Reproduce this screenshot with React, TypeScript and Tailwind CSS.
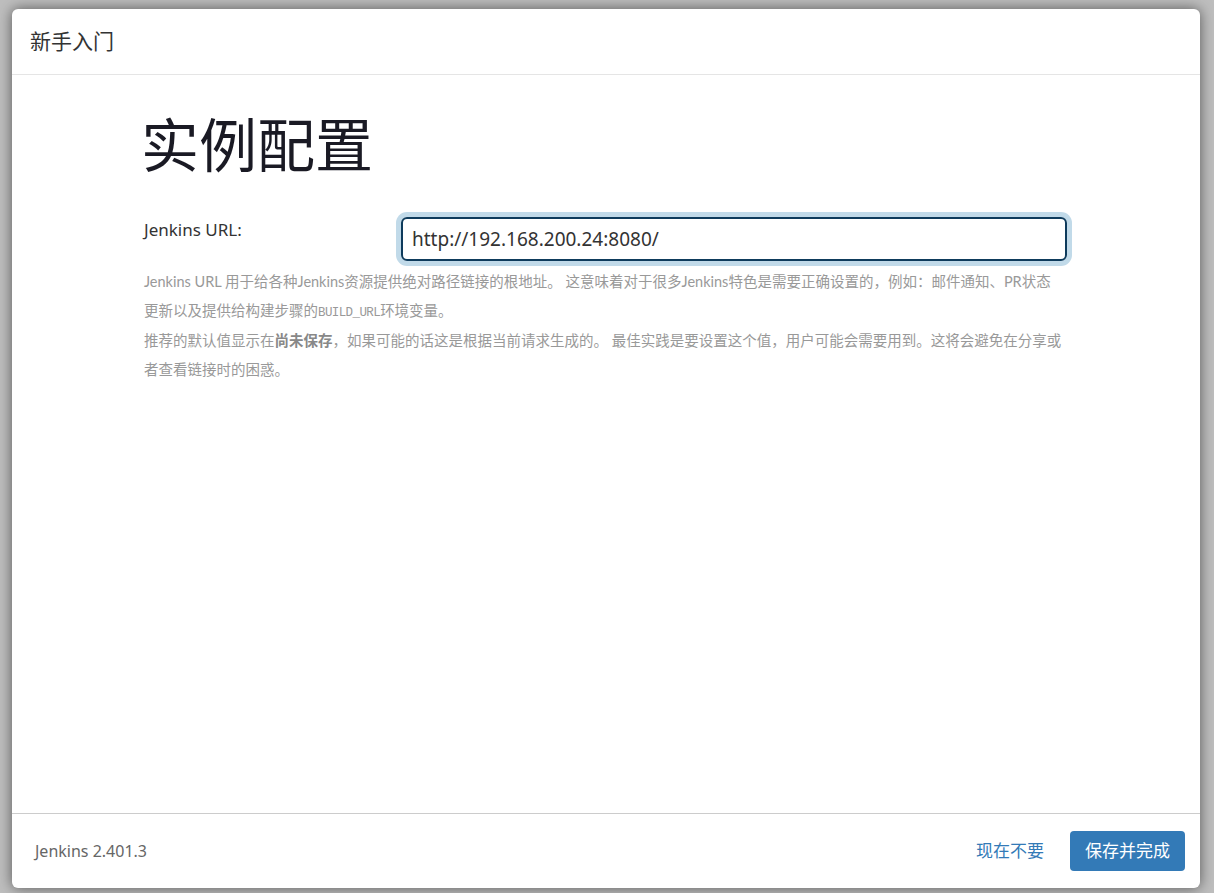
export default function App() {
  const font = { fontFamily: '"Noto Sans", "Noto Sans CJK SC", sans-serif' };
  const help = { fontFamily: 'Lato, "Noto Sans CJK SC", sans-serif' };
  return (
    <div
      className="flex h-[893px] w-full bg-[#bebebe] pt-[9px] pr-[14px] pb-[5px] pl-[12px]"
      style={font}
    >
      <div className="flex flex-1 flex-col overflow-hidden rounded-[6px] bg-white shadow-[0_0_14px_rgba(0,0,0,0.55)]">
        {/* header */}
        <div className="flex h-[66px] shrink-0 items-center border-b border-[#e5e5e5] px-[18px]">
          <span className="text-[21px] text-[#333]">新手入门</span>
        </div>

        {/* body */}
        <div className="flex flex-1 justify-center pt-[38px]">
          <div className="flex w-[930px] flex-col">
            <h1 className="text-[58px] leading-[64px] font-normal text-[#1a1a24]">实例配置</h1>

            <div className="mt-[40px] flex">
              <label className="w-[260px] pt-[1px] pl-[3px] text-[17px] leading-[24px] text-[#333]">
                Jenkins URL:
              </label>
              <div className="flex-1 pr-[4px]">
                <input
                  defaultValue="http://192.168.200.24:8080/"
                  className="h-[44px] w-full rounded-[6px] border-2 border-[#0e3b5c] px-[9px] text-[19px] text-[#333] shadow-[0_0_0_5px_#c1dae9] outline-none"
                  style={font}
                />
              </div>
            </div>

            <div
              className="mt-[6px] flex w-[940px] flex-col gap-[1px] pl-[3px] text-[14.5px] leading-[29px] text-[#999]"
              style={help}
            >
              <p>
                Jenkins URL 用于给各种Jenkins资源提供绝对路径链接的根地址。 这意味着对于很多Jenkins特色是需要正确设置的，例如：邮件通知、PR状态
                <br />
                更新以及提供给构建步骤的
                <code className="font-['Liberation_Mono',monospace] text-[12.5px] leading-none tracking-[-0.6px]">BUILD_URL</code>
                环境变量。
              </p>
              <p>
                推荐的默认值显示在<strong className="font-bold text-[#888]">尚未保存</strong>，如果可能的话这是根据当前请求生成的。 最佳实践是要设置这个值，用户可能会需要用到。这将会避免在分享或
                <br />
                者查看链接时的困惑。
              </p>
            </div>
          </div>
        </div>

        {/* footer */}
        <div className="flex h-[75px] shrink-0 items-center justify-between border-t border-[#cccccc] pr-[15px] pl-[23px]">
          <span className="text-[16px] text-[#666]">Jenkins 2.401.3</span>
          <div className="flex items-center gap-[26px]">
            <a className="text-[17px] text-[#337ab7]">现在不要</a>
            <button className="h-[40px] w-[115px] rounded-[4px] bg-[#337ab7] text-[17px] text-white">
              保存并完成
            </button>
          </div>
        </div>
      </div>
    </div>
  );
}
